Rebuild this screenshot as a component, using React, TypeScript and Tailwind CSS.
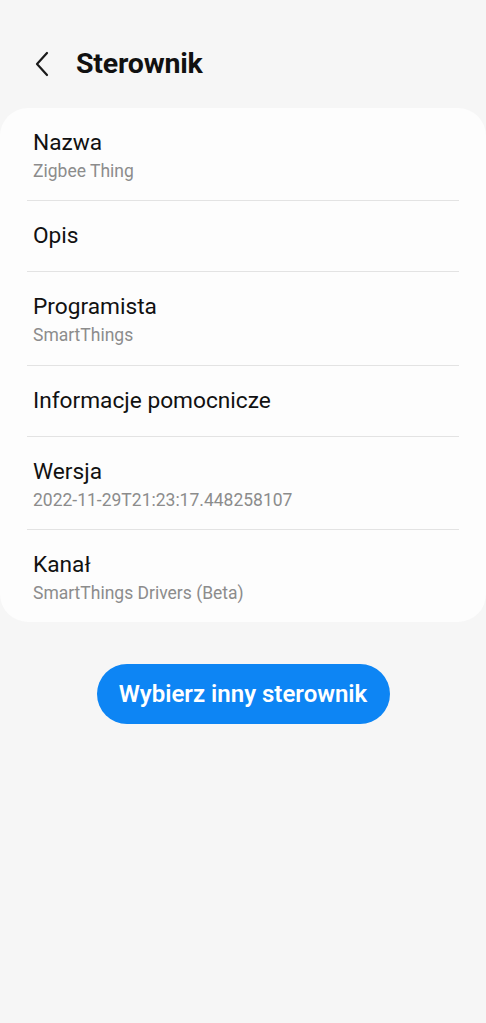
import React from "react";

const rows: { title: string; sub?: string; cls: string }[] = [
  { title: "Nazwa", sub: "Zigbee Thing", cls: "pt-[21px] pb-[17px]" },
  { title: "Opis", cls: "py-[21px]" },
  { title: "Programista", sub: "SmartThings", cls: "pt-[21px] pb-[18px]" },
  { title: "Informacje pomocnicze", cls: "py-[21px]" },
  { title: "Wersja", sub: "2022-11-29T21:23:17.448258107", cls: "pt-[21px] pb-[17px]" },
  { title: "Kanał", sub: "SmartThings Drivers (Beta)", cls: "pt-[21px] pb-[17px]" },
];

export default function App() {
  return (
    <div
      className="w-[486px] h-[1023px] bg-[#f6f6f6] flex flex-col"
      style={{ fontFamily: "Roboto, 'Noto Sans', sans-serif" }}
    >
      <div className="flex items-center h-[108px] pt-[20px] pl-[30px]">
        <svg width="24" height="28" viewBox="0 0 24 28" className="mr-[22px]">
          <path d="M17 3 L7 14 L17 25" fill="none" stroke="#1a1a1a" strokeWidth="2.2" strokeLinecap="round" strokeLinejoin="round" />
        </svg>
        <h1 className="text-[28.5px] leading-[34px] font-bold text-[#111] tracking-[-0.2px]">Sterownik</h1>
      </div>
      <div className="bg-[#fdfdfd] rounded-[28px] flex flex-col">
        {rows.map((r, i) => (
          <React.Fragment key={r.title}>
            {i > 0 && <div className="mx-[27px] h-px bg-[#e3e3e3]" />}
            <div className={"px-[33px] " + r.cls}>
              <div className="text-[22.7px] leading-[28px] text-[#111]">{r.title}</div>
              {r.sub && (
                <div className="mt-[3px] text-[17.5px] leading-[23px] text-[#8c8c8c]">{r.sub}</div>
              )}
            </div>
          </React.Fragment>
        ))}
      </div>
      <div className="flex justify-center mt-[42px]">
        <button className="w-[293px] h-[60px] rounded-full bg-[#0d85f4] text-white text-[24px] font-semibold">
          Wybierz inny sterownik
        </button>
      </div>
    </div>
  );
}
